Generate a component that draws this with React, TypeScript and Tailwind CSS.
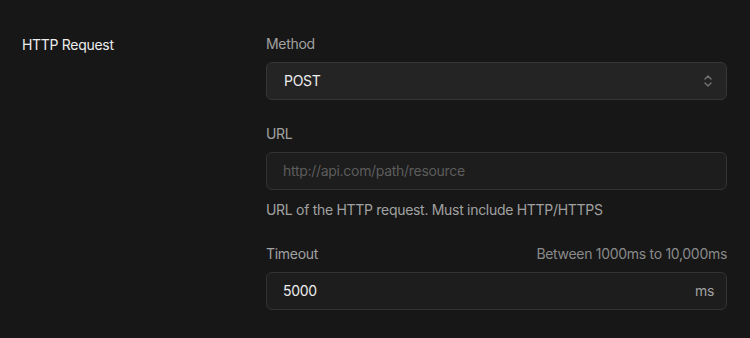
import React from "react";

function ChevronsUpDown() {
  return (
    <svg width="10" height="14" viewBox="0 0 10 14" fill="none" stroke="#6f6f6f" strokeWidth="1.5" strokeLinecap="round" strokeLinejoin="round">
      <path d="M2 5l3-3 3 3" />
      <path d="M2 9l3 3 3-3" />
    </svg>
  );
}

export default function App() {
  return (
    <div
      className="w-[750px] h-[338px] bg-[#171717] overflow-hidden"
      style={{ fontFamily: "Inter, 'Noto Sans', sans-serif" }}
    >
      <div className="grid grid-cols-[244px_461px] px-[22px] pt-[34px] text-[14px] leading-[20px] tracking-[-0.3px]">
        <div className="text-[#ededed] pt-[1px]">HTTP Request</div>
        <div className="flex flex-col gap-6">
          <div className="flex flex-col gap-2">
            <div className="text-[#a1a1a1]">Method</div>
            <div className="h-[38px] rounded-md border border-[#363636] bg-[#242424] flex items-center justify-between pl-[17px] pr-[13px]">
              <span className="text-[#ededed]">POST</span>
              <ChevronsUpDown />
            </div>
          </div>
          <div className="flex flex-col">
            <div className="text-[#a1a1a1]">URL</div>
            <div className="mt-[8px] h-[38px] rounded-md border border-[#333333] bg-[#1d1d1d] flex items-center pl-[16px]">
              <span className="text-[#5c5c5c]">http://api.com/path/resource</span>
            </div>
            <div className="mt-[10px] text-[#a1a1a1]">URL of the HTTP request. Must include HTTP/HTTPS</div>
          </div>
          <div className="flex flex-col gap-2">
            <div className="flex justify-between">
              <span className="text-[#a1a1a1]">Timeout</span>
              <span className="text-[#8a8a8a]">Between 1000ms to 10,000ms</span>
            </div>
            <div className="h-[38px] rounded-md border border-[#333333] bg-[#1d1d1d] flex items-center justify-between pl-[16px] pr-[12px]">
              <span className="text-[#ededed]">5000</span>
              <span className="text-[#a1a1a1]">ms</span>
            </div>
          </div>
        </div>
      </div>
    </div>
  );
}
